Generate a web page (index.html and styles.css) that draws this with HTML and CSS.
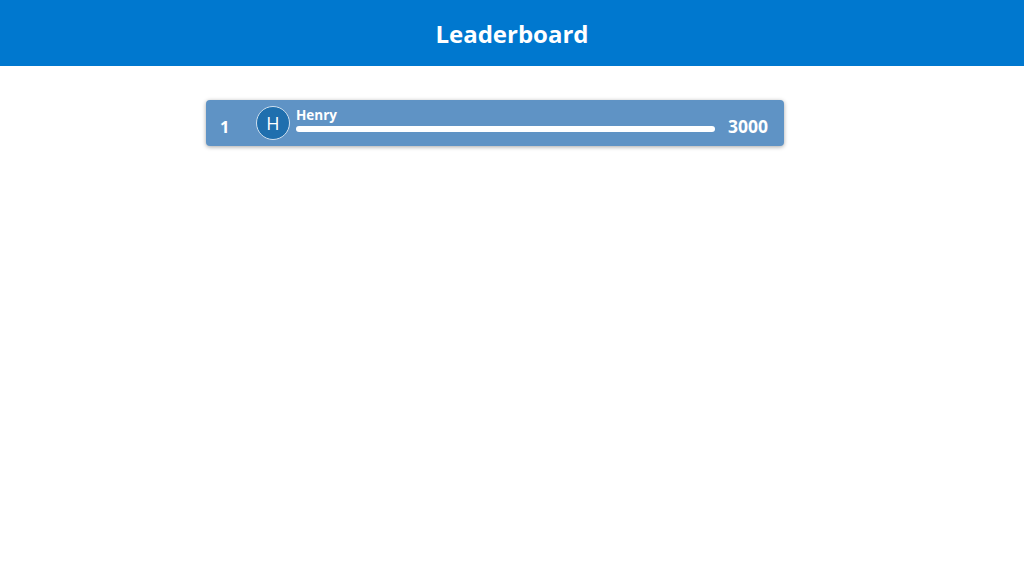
FILE: index.html
```html
<!DOCTYPE html>
<html>
<head>
<meta charset="utf-8">
<link rel="stylesheet" href="styles.css">
</head>
<body>
<header class="header"><h1 class="title">Leaderboard</h1></header>
<main class="board">
  <div class="row">
    <span class="rank">1</span>
    <span class="avatar">H</span>
    <div class="info">
      <span class="name">Henry</span>
      <div class="bar"><div class="fill" style="width:100%"></div></div>
    </div>
    <span class="score">3000</span>
  </div>
</main>
</body>
</html>
```
FILE: styles.css
```css
html, body { margin: 0; padding: 0; background: #fff; }
body { font-family: "Open Sans", "Noto Sans", sans-serif; width: 1024px; height: 576px; overflow: hidden; }
.header { height: 66px; background: #0078cf; display: flex; align-items: center; justify-content: center; }
.title { margin: 0; color: #fff; font-size: 24px; font-weight: 700; letter-spacing: 0; padding-top: 1px; }
.board { padding-top: 34px; padding-left: 206px; }
.row { width: 578px; height: 46px; box-sizing: border-box; background: #5f93c5; border-radius: 4px; box-shadow: 0 1px 4px rgba(0,0,0,0.35); display: flex; align-items: center; padding: 0 16px 0 14px; color: #fff; }
.rank { width: 36px; font-size: 16.5px; font-weight: 700; padding-top: 7px; }
.avatar { width: 32px; height: 32px; border-radius: 50%; background: #1f6fae; border: 1px solid #cfe0ef; display: flex; align-items: center; justify-content: center; font-size: 18px; font-weight: 400; flex-shrink: 0; }
.info { flex: 1; margin-left: 6px; margin-right: 13px; display: flex; flex-direction: column; gap: 2px; margin-top: -7px; }
.name { font-size: 13.5px; font-weight: 700; line-height: 17px; }
.bar { height: 6px; border-radius: 3px; background: transparent; }
.fill { height: 100%; background: #fff; border-radius: 3px; }
.score { font-size: 17.5px; font-weight: 700; padding-top: 6px; }
```
